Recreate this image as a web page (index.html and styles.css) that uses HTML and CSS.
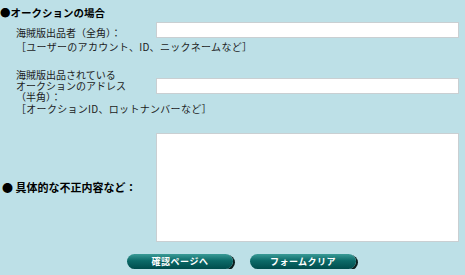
FILE: index.html
```html
<!DOCTYPE html>
<html lang="ja">
<head>
  <meta charset="UTF-8">
  <title>不正出品の報告</title>
  <link rel="stylesheet" href="styles.css">
</head>
<body>
  <form class="report">
    <div class="section-title">●オークションの場合</div>

    <div class="field field-seller">
      <label class="field-label" for="seller">海賊版出品者（全角）：</label>
      <input class="text-input" id="seller" type="text">
    </div>
    <p class="note">［ユーザーのアカウント、ID、ニックネームなど］</p>

    <div class="field field-address">
      <label class="field-label" for="address">海賊版出品されている<br>オークションのアドレス<br>（半角）：</label>
      <input class="text-input" id="address" type="text">
    </div>
    <p class="note">［オークションID、ロットナンバーなど］</p>

    <div class="field field-detail">
      <label class="field-label strong" for="detail">● 具体的な不正内容など：</label>
      <textarea class="text-area" id="detail"></textarea>
    </div>

    <div class="actions">
      <button class="pill-btn" type="button">確認ページへ</button>
      <button class="pill-btn" type="reset">フォームクリア</button>
    </div>
  </form>
</body>
</html>
```

FILE: styles.css
```css
:root {
  --bg: #bde0e7;
  --text: #1c1c1c;
  --field-border: #c9cfd2;
  --btn-top: #3a9b97;
  --btn-bottom: #004c4c;
}

body {
  margin: 0;
  background-color: var(--bg);
  color: var(--text);
  font-family: "Noto Sans CJK JP", "Noto Sans", sans-serif;
  font-size: 10px;
  line-height: 11px;
}

.report {
  width: 465px;
  padding-top: 7px;
}

.section-title {
  font-size: 10.5px;
  line-height: 12px;
  font-weight: 700;
  color: #000;
}

.field {
  display: grid;
  grid-template-columns: 156px 303px;
}

.field-label {
  padding-left: 16px;
}

.field-seller {
  margin-top: 3px;
}

.field-seller .field-label {
  align-self: end;
}

.field-address {
  margin-top: 17px;
  align-items: center;
}

.field-detail {
  margin-top: 19px;
  align-items: center;
}

.field-label.strong {
  padding-left: 2px;
  font-size: 11px;
  font-weight: 700;
  color: #000;
}

.text-input,
.text-area {
  box-sizing: border-box;
  margin: 0;
  border: 1px solid var(--field-border);
  background: #fff;
  font: inherit;
}

.text-input {
  height: 16px;
  width: 303px;
}

.text-area {
  height: 109px;
  width: 303px;
  resize: none;
}

.note {
  margin: 3px 0 0;
  padding-left: 16px;
  letter-spacing: 0.3px;
}

.field-address + .note {
  margin-top: 1px;
}

.actions {
  display: flex;
  gap: 17px;
  margin-top: 12px;
  padding-left: 127px;
}

.pill-btn {
  width: 106px;
  height: 15px;
  padding: 0;
  border: none;
  border-radius: 8px;
  background: linear-gradient(to bottom, var(--btn-top), #0c6a68 45%, var(--btn-bottom));
  box-shadow: 2px 1px 0 #0a1e1e;
  color: #fff;
  font-family: inherit;
  font-size: 9px;
  font-weight: 700;
  letter-spacing: 0.5px;
  line-height: 15px;
  cursor: pointer;
}
```
